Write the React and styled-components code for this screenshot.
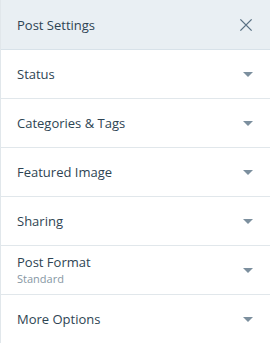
import React from "react";
import styled, { createGlobalStyle } from "styled-components";

const GlobalStyle = createGlobalStyle`
  html, body {
    margin: 0;
    padding: 0;
    background: #fff;
  }
  body {
    font-family: "Open Sans", "Noto Sans", sans-serif;
    color: #2e4453;
  }
`;

const Panel = styled.div`
  width: 270px;
  height: 343px;
  box-sizing: border-box;
  border-left: 1px solid #e1e7eb;
  background: #fff;
  overflow: hidden;
`;

const Header = styled.div`
  display: flex;
  align-items: center;
  justify-content: space-between;
  height: 49px;
  padding: 0 15px 0 16px;
  background: #e9eff3;
  border-bottom: 1px solid #d8e2e9;
`;

const Title = styled.div`
  font-size: 13px;
  font-weight: 500;
  color: #2e4453;
`;

const Close = styled.button`
  display: flex;
  border: 0;
  padding: 0;
  background: none;
  color: #5a7184;
  cursor: pointer;
`;

const Row = styled.div`
  display: flex;
  align-items: center;
  justify-content: space-between;
  height: 48px;
  padding: 0 17px 0 16px;
  border-bottom: 1px solid #e1e7eb;
  cursor: pointer;
`;

const Label = styled.div`
  display: flex;
  flex-direction: column;
`;

const Name = styled.span`
  font-size: 13px;
  font-weight: 500;
  line-height: 17px;
`;

const Sub = styled.span`
  font-size: 11px;
  line-height: 15px;
  color: #8797a4;
`;

const Caret = styled.span`
  width: 0;
  height: 0;
  border-left: 5px solid transparent;
  border-right: 5px solid transparent;
  border-top: 5px solid #7c8f9e;
`;

const sections = [
  { name: "Status" },
  { name: "Categories & Tags" },
  { name: "Featured Image" },
  { name: "Sharing" },
  { name: "Post Format", sub: "Standard" },
  { name: "More Options" },
];

export default function App() {
  return (
    <>
      <GlobalStyle />
      <Panel>
        <Header>
          <Title>Post Settings</Title>
          <Close aria-label="Close">
            <svg width="18" height="18" viewBox="0 0 24 24" fill="none" stroke="currentColor" strokeWidth="1.8">
              <path d="M4.5 4.5l15 15M19.5 4.5l-15 15" />
            </svg>
          </Close>
        </Header>
        {sections.map((s) => (
          <Row key={s.name}>
            <Label>
              <Name>{s.name}</Name>
              {s.sub && <Sub>{s.sub}</Sub>}
            </Label>
            <Caret />
          </Row>
        ))}
      </Panel>
    </>
  );
}
